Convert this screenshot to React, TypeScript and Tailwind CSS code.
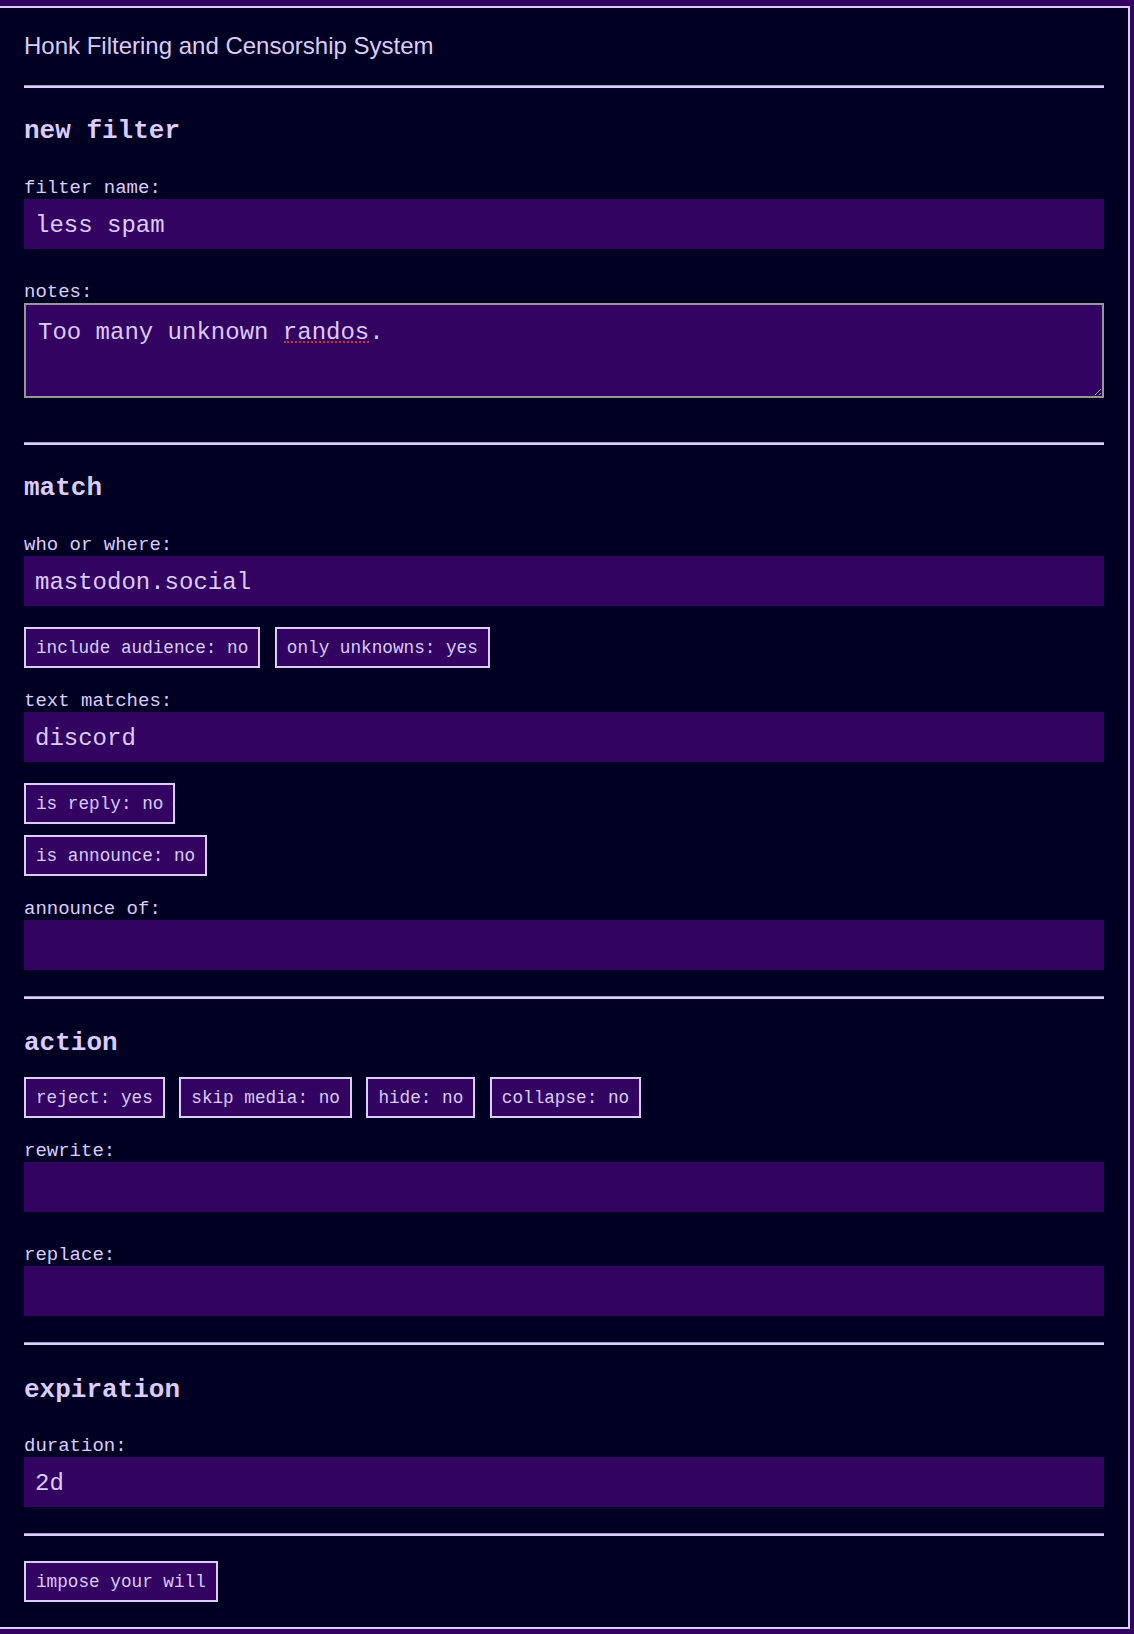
import clsx from "clsx"

const Rule = ({ className }: { className?: string }) => (
    <hr className={clsx("h-[3px] border-0 border-t border-t-[#a397c2] bg-[#dccdfb]", className)} />
)

const Heading = ({ children, className }: { children: string; className?: string }) => (
    <h3 className={clsx("font-bold text-[26px] leading-[30px]", className)}>{children}</h3>
)

const Label = ({ children, className }: { children: string; className?: string }) => (
    <label className={clsx("block text-[19px] leading-[22px]", className)}>{children}</label>
)

const Field = ({ value = "" }: { value?: string }) => (
    <input
        readOnly
        defaultValue={value}
        className="block w-full h-[50px] pt-[2px] px-[11px] bg-[#320360] text-[24px] text-[#ddccff] outline-none"
    />
)

const Toggle = ({ children }: { children: string }) => (
    <button
        type="button"
        className="border-2 border-[#ddccff] bg-[#320360] px-[10px] pt-[10px] pb-[8px] text-[17.7px] leading-[19px] text-[#ddccff] whitespace-pre"
    >
        {children}
    </button>
)

const App = () => {
    return <div className="min-h-screen bg-[#320360] pt-[6px] pb-[5px]">
        <div className="-ml-[2px] mr-[4px] border-2 border-[#ddccff] bg-[#000022] px-[24px] pt-[24px] pb-[25px] text-[#ddccff] font-['Liberation_Mono','Courier_New',monospace]">
            <p className="font-['Liberation_Sans',Arial,sans-serif] text-[24px] leading-[27px]">
                Honk Filtering and Censorship System
            </p>
            <Rule className="mt-[26px]" />

            <form>
                <Heading className="mt-[28px]">new filter</Heading>
                <Label className="mt-[31px]">filter name:</Label>
                <Field value="less spam" />
                <Label className="mt-[32px]">notes:</Label>
                <div className="relative">
                    <textarea
                        readOnly
                        spellCheck={false}
                        defaultValue="Too many unknown randos."
                        className="block w-full h-[95px] border-2 border-[#979797] bg-[#320360] pt-[14px] px-[12px] text-[24px] leading-[28px] text-[#ddccff] outline-none"
                    />
                    {/* spellcheck squiggle under "randos" */}
                    <span className="absolute left-[260px] top-[38px] w-[85px] border-b-2 border-dotted border-[#d0302a]" />
                </div>

                <Rule className="mt-[44px]" />
                <Heading className="mt-[28px]">match</Heading>
                <Label className="mt-[31px]">who or where:</Label>
                <Field value="mastodon.social" />
                <div className="mt-[21px] flex gap-[14.5px]">
                    <Toggle>include audience: no</Toggle>
                    <Toggle>only unknowns: yes</Toggle>
                </div>
                <Label className="mt-[22px]">text matches:</Label>
                <Field value="discord" />
                <div className="mt-[21px] flex flex-col items-start gap-[11px]">
                    <Toggle>is reply: no</Toggle>
                    <Toggle>is announce: no</Toggle>
                </div>
                <Label className="mt-[22px]">announce of:</Label>
                <Field />

                <Rule className="mt-[26px]" />
                <Heading className="mt-[29px]">action</Heading>
                <div className="mt-[19px] flex gap-[14.5px]">
                    <Toggle>reject: yes</Toggle>
                    <Toggle>skip media: no</Toggle>
                    <Toggle>hide: no</Toggle>
                    <Toggle>collapse: no</Toggle>
                </div>
                <Label className="mt-[22px]">rewrite:</Label>
                <Field />
                <Label className="mt-[32px]">replace:</Label>
                <Field />

                <Rule className="mt-[26px]" />
                <Heading className="mt-[30px]">expiration</Heading>
                <Label className="mt-[30px]">duration:</Label>
                <Field value="2d" />

                <Rule className="mt-[26px]" />
                <div className="mt-[25px]">
                    <Toggle>impose your will</Toggle>
                </div>
            </form>
        </div>
    </div>
}

export default App
